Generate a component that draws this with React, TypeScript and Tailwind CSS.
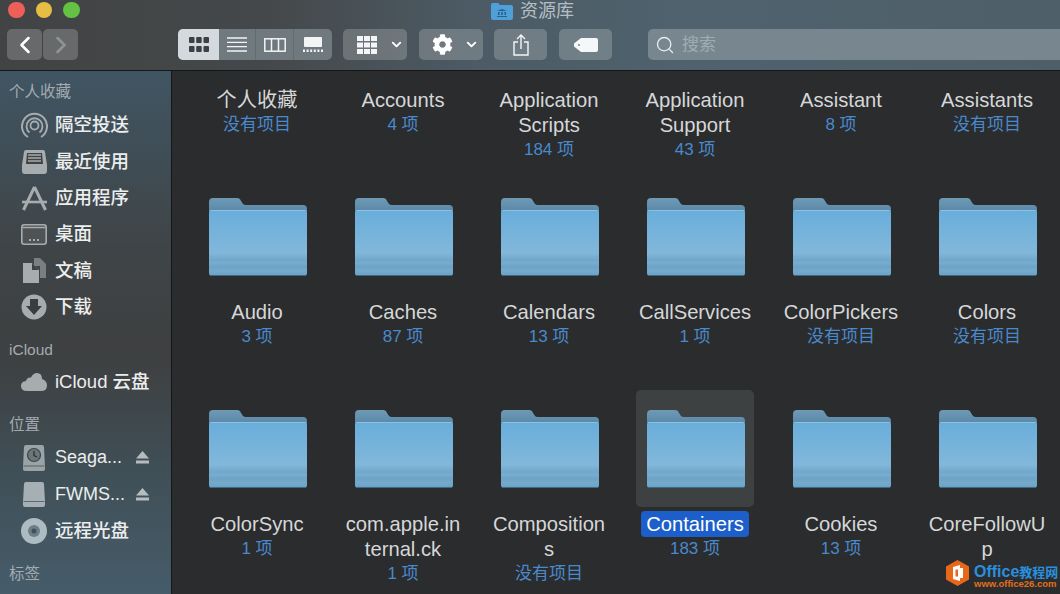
import React from 'react';
import { ChevronDown, ChevronLeft, ChevronRight, Search } from 'lucide-react';
import { FaCog } from 'react-icons/fa';

const latin = "font-['Liberation_Sans','Noto_Sans_CJK_SC',sans-serif]";

const folders: { name: string; sub: string; selected?: boolean }[] = [
  { name: '个人收藏', sub: '没有项目' },
  { name: 'Accounts', sub: '4 项' },
  { name: 'Application Scripts', sub: '184 项' },
  { name: 'Application Support', sub: '43 项' },
  { name: 'Assistant', sub: '8 项' },
  { name: 'Assistants', sub: '没有项目' },
  { name: 'Audio', sub: '3 项' },
  { name: 'Caches', sub: '87 项' },
  { name: 'Calendars', sub: '13 项' },
  { name: 'CallServices', sub: '1 项' },
  { name: 'ColorPickers', sub: '没有项目' },
  { name: 'Colors', sub: '没有项目' },
  { name: 'ColorSync', sub: '1 项' },
  { name: 'com.apple.internal.ck', sub: '1 项' },
  { name: 'Compositions', sub: '没有项目' },
  { name: 'Containers', sub: '183 项', selected: true },
  { name: 'Cookies', sub: '13 项' },
  { name: 'CoreFollowUp', sub: '' },
];

const FolderIcon = () => (
  <svg width="98" height="78" viewBox="0 0 98 78">
    <defs>
      <linearGradient id="folderFront" x1="0" y1="0" x2="0" y2="1">
        <stop offset="0" stopColor="#68aedb" />
        <stop offset="0.65" stopColor="#82b7da" />
        <stop offset="0.76" stopColor="#70a7ca" />
        <stop offset="0.8" stopColor="#78adcf" />
        <stop offset="0.86" stopColor="#6da3c5" />
        <stop offset="0.92" stopColor="#74aacc" />
        <stop offset="1" stopColor="#69a2c6" />
      </linearGradient>
      <linearGradient id="folderBack" x1="0" y1="0" x2="0" y2="1">
        <stop offset="0" stopColor="#6f9ab6" />
        <stop offset="1" stopColor="#4f7f9f" />
      </linearGradient>
    </defs>
    <path d="M0 16V4Q0 0 4 0H28Q31 0 32 3L34 6Q35 7 37 7H94Q98 7 98 11V20H0Z" fill="url(#folderBack)" />
    <path d="M0 15Q0 12 3 12H95Q98 12 98 15V75Q98 78 95 78H3Q0 78 0 75Z" fill="url(#folderFront)" />
    <path d="M3 12H95Q97 12 97.500 13H.5Q1 12 3 12Z" fill="#8fc0de" />
    <path d="M1 77.500H97" stroke="#3f6a86" strokeWidth="1" />
  </svg>
);

const FolderCell = ({ name, sub, selected }: { name: string; sub: string; selected?: boolean }) => (
  <div className="flex flex-col items-center">
    <div className={`w-[118px] h-[117px] rounded-[5px] flex justify-center pt-[20px] pl-[2px] ${selected ? 'bg-[#3e4142]' : ''}`}>
      <FolderIcon />
    </div>
    <div className={`w-[120px] mt-[5px] text-center text-[20.200px] leading-[25px] wrap-anywhere ${latin}`}>
      {selected ? (
        <span className="inline-block bg-[#1d5fca] text-white rounded-[4px] px-[5px] h-[26px] -mt-[2px] pt-[1px]">{name}</span>
      ) : (
        <span className="text-[#d6d7d8]">{name}</span>
      )}
    </div>
    <div className={`text-[17px] leading-[24px] text-[#4a89cb] ${latin}`}>{sub}</div>
  </div>
);

const ToolButton = ({ className, children }: { className: string; children: React.ReactNode }) => (
  <div className={`h-[31px] rounded-[5px] bg-white/20 flex items-center ${className}`}>{children}</div>
);

const SideHead = ({ children, className }: { children: React.ReactNode; className: string }) => (
  <div className={`pl-[9px] text-[15.500px] leading-[20px] text-[#a3abb0] ${latin} ${className}`}>{children}</div>
);

const SideItem = ({ icon, label, eject }: { icon: React.ReactNode; label: string; eject?: boolean }) => (
  <div className="h-[36.400px] flex items-center">
    <div className="w-[55px] flex justify-center pl-[13px] shrink-0">{icon}</div>
    <span className={`font-medium text-[#eceded] ${latin} ${eject ? 'text-[18px]' : 'text-[18.500px]'}`}>{label}</span>
    {eject && (
      <svg className="ml-auto mr-[22px]" width="13" height="13" viewBox="0 0 13 13">
        <path d="M6.500 0L13 7.500H0Z M0 9.500H13V12.500H0Z" fill="#b5bcc0" />
      </svg>
    )}
  </div>
);

const g = '#a7acae';

const AirdropIcon = () => (
  <svg width="27" height="27" viewBox="0 0 27 27" fill="none" stroke={g}>
    <path d="M7 25A12.500 12.500 0 1 1 20 25" strokeWidth="2" />
    <path d="M8.500 20.500A8 8 0 1 1 18.500 20.500" strokeWidth="1.800" />
    <circle cx="13.500" cy="13.500" r="4" strokeWidth="1.800" />
  </svg>
);
const RecentIcon = () => (
  <svg width="25" height="24" viewBox="0 0 25 24">
    <path d="M4 0H21Q23 0 23 2L25 15V21Q25 24 22 24H3Q0 24 0 21V15L2 2Q2 0 4 0Z" fill={g} />
    <path d="M5 3H20L21 14H4Z" fill="#3f4344" />
    <path d="M6 5H19M6 8H19M6 11H19" stroke={g} strokeWidth="1.500" />
  </svg>
);
const AppsIcon = () => (
  <svg width="27" height="27" viewBox="0 0 27 27" fill="none" stroke={g} strokeWidth="3">
    <path d="M2.500 26L13.500 3M24.500 26L13.500 3" />
    <path d="M1 18H26" strokeWidth="2.600" />
  </svg>
);
const DesktopIcon = () => (
  <svg width="26" height="21" viewBox="0 0 26 21">
    <rect x="0.800" y="0.800" width="24.400" height="19.400" rx="2.500" fill="#505354" stroke={g} strokeWidth="1.600" />
    <path d="M1.500 3.500H24.500" stroke={g} strokeWidth="1.500" />
    <path d="M8 15H10V17H8ZM12 15H14V17H12ZM16 15H18V17H16Z" fill={g} />
  </svg>
);
const DocsIcon = () => (
  <svg width="23" height="25" viewBox="0 0 23 25">
    <path d="M11 0H17L23 6V20H17V8H11Z" fill="#7b7f81" />
    <path d="M0 5H9L16 12V25H0Z" fill={g} />
    <path d="M9 5V12H16Z" fill="#3f4344" />
  </svg>
);
const DownloadIcon = () => (
  <svg width="26" height="26" viewBox="0 0 26 26">
    <circle cx="13" cy="13" r="12.500" fill={g} />
    <path d="M9 5H17V12H21L13 21L5 12H9Z" fill="#3a3d3f" />
  </svg>
);
const CloudIcon = () => (
  <svg width="26" height="18" viewBox="0 0 26 18">
    <path d="M6 18Q0 18 0 13Q0 8.500 5 8Q6 4 10 4.500Q12 0 16 0Q21 0 21 6Q26 7.500 26 12.500Q26 18 20 18Z" fill={g} />
  </svg>
);
const BackupDiskIcon = () => (
  <svg width="22" height="26" viewBox="0 0 22 26">
    <path d="M3 0H19Q21 0 21 2L22 22V24Q22 26 20 26H2Q0 26 0 24V22L1 2Q1 0 3 0Z" fill="#9aa3a6" />
    <path d="M0.500 21H21.500" stroke="#556066" strokeWidth="1" />
    <circle cx="11" cy="10" r="6.500" fill="#6c7578" stroke="#39464d" strokeWidth="1.200" />
    <path d="M11 6V10.500L14 12" stroke="#27343b" strokeWidth="1.300" fill="none" />
  </svg>
);
const DiskIcon = () => (
  <svg width="22" height="25" viewBox="0 0 22 25">
    <path d="M3 0H19Q21 0 21 2L22 20V23Q22 25 20 25H2Q0 25 0 23V20L1 2Q1 0 3 0Z" fill="#a6b0b4" />
    <path d="M0.500 19.500H21.500" stroke="#5c6a71" strokeWidth="1" />
  </svg>
);
const CdIcon = () => (
  <svg width="26" height="26" viewBox="0 0 26 26">
    <circle cx="13" cy="13" r="13" fill="#adbcc3" />
    <circle cx="13" cy="13" r="6" fill="#6f7d84" />
    <circle cx="13" cy="13" r="2.500" fill="#3f525d" />
  </svg>
);

export default function App() {
  return (
    <div className={`relative w-[1060px] h-[594px] overflow-hidden flex flex-col bg-[#2a2c2e] ${latin}`}>
      {/* toolbar */}
      <div className="h-[71px] shrink-0 border-b border-[#141618] bg-[linear-gradient(90deg,#414344_0%,#45484a_25%,#4c5b65_45%,#4f626d_65%,#4f5f69_100%)]">
        <div className="relative h-[20px] mb-[9px] flex items-center pl-[8px] gap-[11px]">
          <div className="w-[16.500px] h-[16.500px] rounded-full bg-[#ef5f59]" />
          <div className="w-[16.500px] h-[16.500px] rounded-full bg-[#e6be43]" />
          <div className="w-[16.500px] h-[16.500px] rounded-full bg-[#63c144]" />
          <div className="absolute left-[491px] top-[1px] flex items-center gap-[7px]">
            <svg width="22" height="17" viewBox="0 0 22 17">
              <path d="M0 2Q0 0 2 0H7L9 2H20Q22 2 22 4V15Q22 17 20 17H2Q0 17 0 15Z" fill="#4f9fd8" />
              <path d="M11 6L16 8H6ZM7 9H8.500V12H7ZM10.200 9H11.800V12H10.200ZM13.500 9H15V12H13.500ZM6 13H16V14H6Z" fill="#2b5f8a" />
            </svg>
            <span className="text-[18px] leading-[20px] text-[#b4bec4]">资源库</span>
          </div>
        </div>
        <div className="flex items-center pl-[7px]">
          <ToolButton className="w-[35px] justify-center">
            <ChevronLeft className="w-[28px] h-[28px] text-white" strokeWidth={2.200} />
          </ToolButton>
          <ToolButton className="w-[35px] ml-[1px] justify-center">
            <ChevronRight className="w-[28px] h-[28px] text-[#8e9496]" strokeWidth={2.200} />
          </ToolButton>
          <div className="ml-[100px] w-[154px] h-[31px] rounded-[5px] bg-[#70797e] flex overflow-hidden">
            <div className="w-[41px] bg-[#d3d9dd] flex items-center justify-center">
              <svg width="20" height="15" viewBox="0 0 20 15" fill="#3b4044">
                <rect x="0" y="0" width="5.500" height="6" rx="1" />
                <rect x="7.200" y="0" width="5.500" height="6" rx="1" />
                <rect x="14.500" y="0" width="5.500" height="6" rx="1" />
                <rect x="0" y="9" width="5.500" height="6" rx="1" />
                <rect x="7.200" y="9" width="5.500" height="6" rx="1" />
                <rect x="14.500" y="9" width="5.500" height="6" rx="1" />
              </svg>
            </div>
            <div className="w-[37px] border-r border-[#626b70] flex items-center justify-center">
              <svg width="20" height="15" viewBox="0 0 20 15" stroke="#f2f4f5" strokeWidth="1.300">
                <path d="M0 1H20M0 5.300H20M0 9.600H20M0 14H20" />
              </svg>
            </div>
            <div className="w-[38px] border-r border-[#626b70] flex items-center justify-center">
              <svg width="22" height="14" viewBox="0 0 22 14" fill="none" stroke="#f2f4f5" strokeWidth="1.500">
                <rect x="0.800" y="0.800" width="20.400" height="12.400" />
                <path d="M7.500 1V13M14.500 1V13" />
              </svg>
            </div>
            <div className="w-[38px] flex items-center justify-center">
              <svg width="20" height="15" viewBox="0 0 20 15" fill="#f2f4f5">
                <rect x="1" y="0" width="18" height="10" rx="1" />
                <path d="M0 12.500H2V15H0ZM3.600 12.500H5.600V15H3.600ZM7.200 12.500H9.200V15H7.200ZM10.800 12.500H12.800V15H10.800ZM14.400 12.500H16.400V15H14.400ZM18 12.500H20V15H18Z" />
              </svg>
            </div>
          </div>
          <ToolButton className="ml-[11px] w-[64px] gap-[12px] pl-[14px]">
            <svg width="20" height="18" viewBox="0 0 20 18" fill="#f4f5f6">
              <rect x="0" y="0" width="6" height="5" />
              <rect x="7" y="0" width="6" height="5" />
              <rect x="14" y="0" width="6" height="5" />
              <rect x="0" y="6.500" width="6" height="5" />
              <rect x="7" y="6.500" width="6" height="5" />
              <rect x="14" y="6.500" width="6" height="5" />
              <rect x="0" y="13" width="6" height="5" />
              <rect x="7" y="13" width="6" height="5" />
              <rect x="14" y="13" width="6" height="5" />
            </svg>
            <ChevronDown className="w-[15px] h-[15px] text-white" strokeWidth={3} />
          </ToolButton>
          <ToolButton className="ml-[12px] w-[64px] gap-[11px] pl-[13px]">
            <FaCog className="w-[21px] h-[21px] text-white" />
            <ChevronDown className="w-[15px] h-[15px] text-white" strokeWidth={3} />
          </ToolButton>
          <ToolButton className="ml-[11px] w-[53px] justify-center">
            <svg width="16" height="22" viewBox="0 0 16 22" fill="none" stroke="#f4f5f6" strokeWidth="1.400">
              <path d="M5 8H1V21H15V8H11" />
              <path d="M8 15V1M4 5L8 1L12 5" />
            </svg>
          </ToolButton>
          <ToolButton className="ml-[12px] w-[53px] justify-center">
            <svg width="24" height="14" viewBox="0 0 24 14">
              <path d="M7 0H22Q24 0 24 2V12Q24 14 22 14H7L0 8.500V5.500Z" fill="#f6f7f8" />
              <circle cx="5" cy="7" r="1" fill="#788389" />
            </svg>
          </ToolButton>
          <div className="ml-[36px] flex-1 h-[31px] rounded-l-[5px] bg-[#78878f] flex items-center pl-[7px] gap-[7px]">
            <Search className="w-[20px] h-[20px] text-[#e8ecee]" strokeWidth={1.600} />
            <span className="text-[17px] text-[#a0acb2]">搜索</span>
          </div>
        </div>
      </div>

      <div className="flex-1 flex min-h-0">
        {/* sidebar */}
        <div className="w-[172px] shrink-0 border-r border-[#141618] bg-[linear-gradient(180deg,#405563_0%,#3f4446_35%,#3e4041_55%,#405058_78%,#465c6a_100%)] overflow-hidden">
          <SideHead className="mt-[11px]">个人收藏</SideHead>
          <div className="mt-[5px]">
            <SideItem icon={<AirdropIcon />} label="隔空投送" />
            <SideItem icon={<RecentIcon />} label="最近使用" />
            <SideItem icon={<AppsIcon />} label="应用程序" />
            <SideItem icon={<DesktopIcon />} label="桌面" />
            <SideItem icon={<DocsIcon />} label="文稿" />
            <SideItem icon={<DownloadIcon />} label="下载" />
          </div>
          <SideHead className="mt-[15px]">iCloud</SideHead>
          <div className="mt-[3px]">
            <SideItem icon={<CloudIcon />} label="iCloud 云盘" />
          </div>
          <SideHead className="mt-[15px]">位置</SideHead>
          <div className="mt-[5px]">
            <SideItem icon={<BackupDiskIcon />} label="Seaga..." eject />
            <SideItem icon={<DiskIcon />} label="FWMS..." eject />
            <SideItem icon={<CdIcon />} label="远程光盘" />
          </div>
          <SideHead className="mt-[15px]">标签</SideHead>
        </div>

        {/* icon grid, scrolled so the first row of folders is cut off */}
        <div className="flex-1 min-w-0 overflow-hidden">
          <div className="-mt-[105px] ml-[12px] grid grid-cols-[repeat(6,146px)] auto-rows-[212px]">
            {folders.map((f) => (
              <FolderCell key={f.name} name={f.name} sub={f.sub} selected={f.selected} />
            ))}
          </div>
        </div>
      </div>

      {/* watermark */}
      <div className="absolute left-[946px] top-[560px] flex items-start gap-[5px]">
        <svg width="23" height="26" viewBox="0 0 23 26">
          <path d="M11.500 0L23 6.500V19.500L11.500 26L0 19.500V6.500Z" fill="#e8681a" />
          <path d="M7 7L14 5V21L7 19Z" fill="#fff" />
          <path d="M14 8H17V18H14Z" fill="#fff" />
          <path d="M9.500 9.500H12V16.500H9.500Z" fill="#e8681a" />
        </svg>
        <div className="flex flex-col mt-[6px]">
          <span className="leading-[12px] font-bold text-[#2a8fdc] whitespace-nowrap">
            <span className="text-[16px]">Office</span>
            <span className="text-[13px]">教程网</span>
          </span>
          <span className="text-[9.500px] leading-[10px] font-bold text-[#e2701c] whitespace-nowrap">www.office26.com</span>
        </div>
      </div>
    </div>
  );
}
